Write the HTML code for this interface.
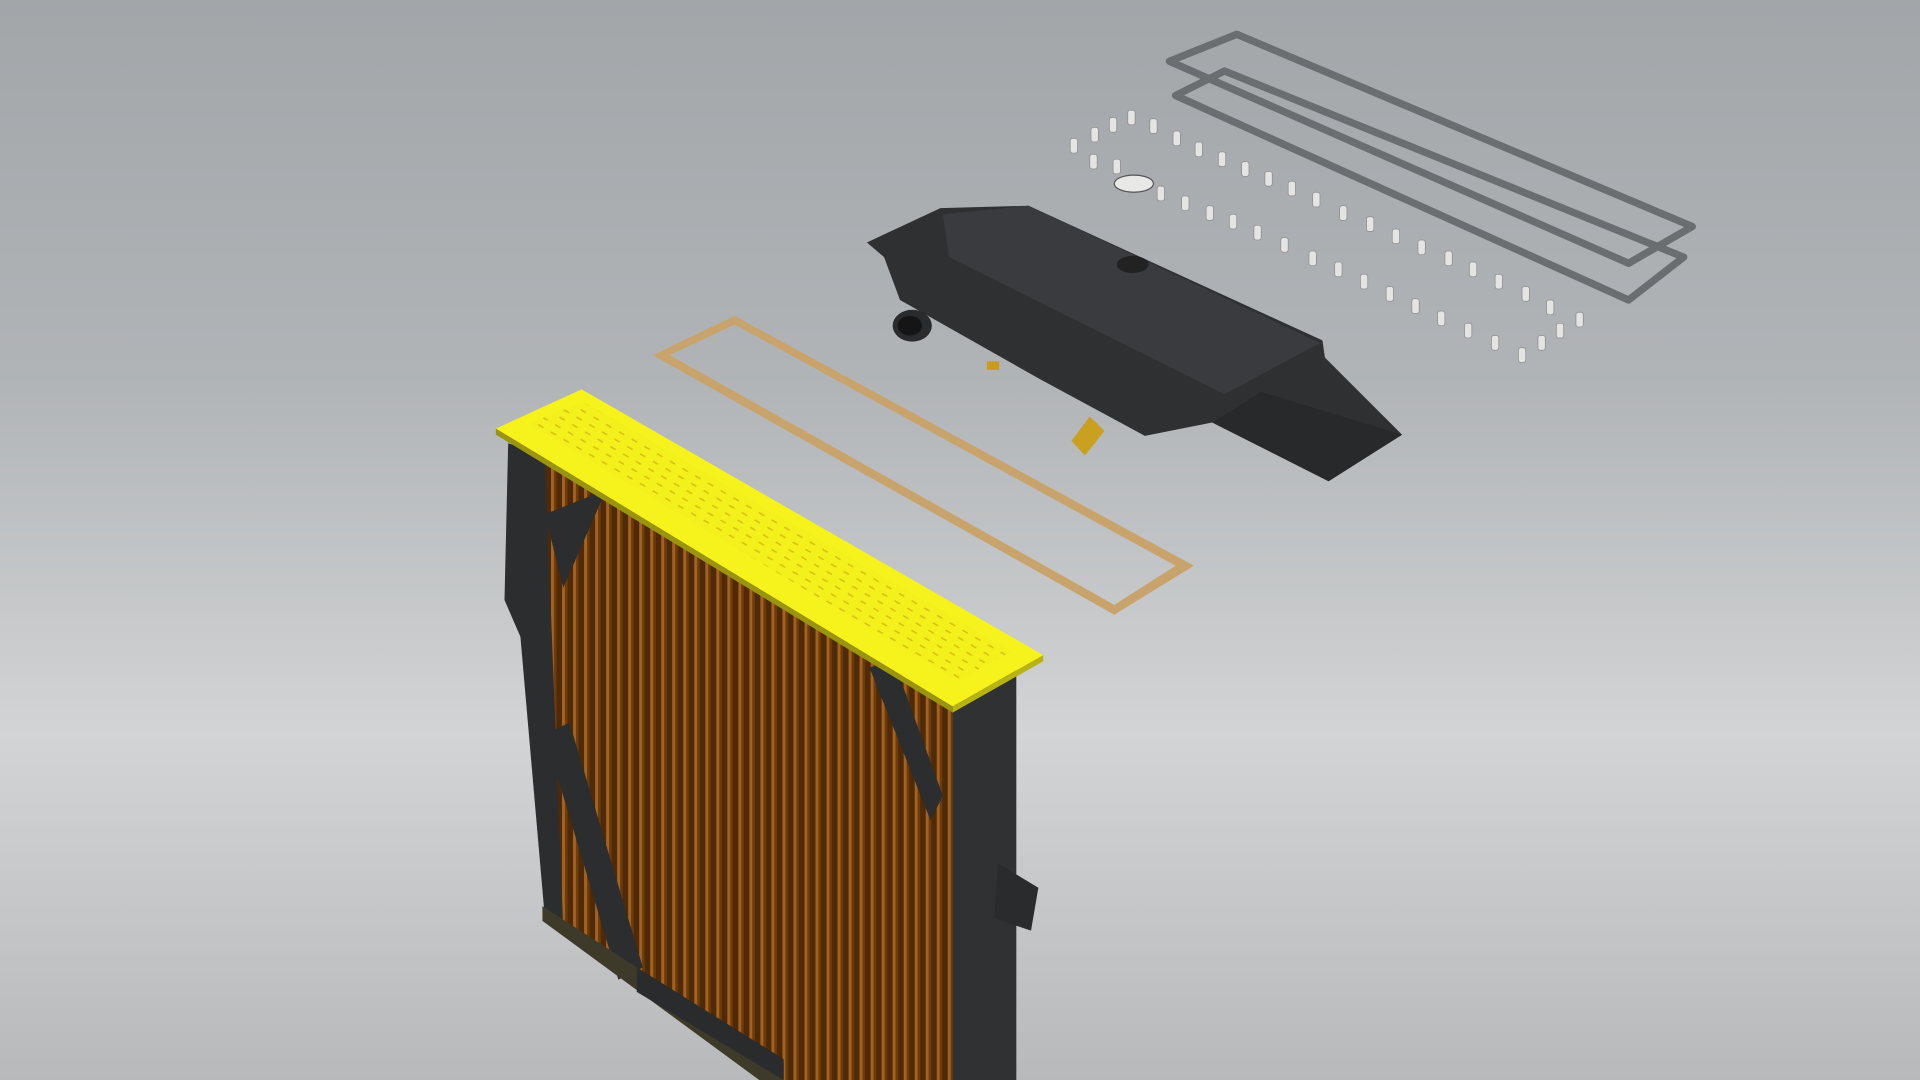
<!DOCTYPE html>
<html><head><meta charset="utf-8"><style>
html,body{margin:0;padding:0;width:1920px;height:1080px;overflow:hidden;background:#c4c6c8}
svg{display:block}
</style></head><body>
<svg width="1920" height="1080" viewBox="0 0 1568 882" preserveAspectRatio="none" xmlns="http://www.w3.org/2000/svg">
<defs>
<linearGradient id="bg" gradientUnits="userSpaceOnUse" x1="0" y1="0" x2="0" y2="882">
<stop offset="0" stop-color="#a2a6a9"/>
<stop offset="0.35" stop-color="#b1b4b7"/>
<stop offset="0.68" stop-color="#d2d4d5"/>
<stop offset="1" stop-color="#b7b9bb"/>
</linearGradient>
<pattern id="fins" width="9" height="10" patternUnits="userSpaceOnUse">
<rect width="9" height="10" fill="#4e2a08"/>
<rect x="0" width="2.5" height="10" fill="#a4621c"/>
<rect x="2.5" width="2" height="10" fill="#6e3c0c"/>
</pattern>
<pattern id="slots" width="12" height="7" patternUnits="userSpaceOnUse" patternTransform="rotate(30)">
<rect width="12" height="7" fill="#f2ee1a"/>
<rect x="2" y="3" width="5" height="1.2" fill="#c29a10"/>
</pattern>
</defs>
<rect width="1568" height="882" fill="url(#bg)"/>

<!-- gray gaskets -->
<polygon points="955,50 1010,28 1382,185 1330,215" fill="none" stroke="#6b6e71" stroke-width="6" stroke-linejoin="round"/>
<polygon points="960,78 1000,58 1375,210 1330,245" fill="none" stroke="#6b6e71" stroke-width="6" stroke-linejoin="round"/>

<!-- bolts -->
<g fill="#e4e4e2" stroke="#8c8c8a" stroke-width="0.6">
<rect x="874" y="113" width="6" height="12" rx="2"/><rect x="891" y="104" width="6" height="12" rx="2"/><rect x="906" y="96" width="6" height="12" rx="2"/><rect x="921" y="90" width="6" height="12" rx="2"/><rect x="939" y="97" width="6" height="12" rx="2"/><rect x="958" y="107" width="6" height="12" rx="2"/><rect x="976" y="116" width="6" height="12" rx="2"/><rect x="995" y="124" width="6" height="12" rx="2"/><rect x="1014" y="132" width="6" height="12" rx="2"/><rect x="1033" y="140" width="6" height="12" rx="2"/><rect x="1052" y="148" width="6" height="12" rx="2"/><rect x="1072" y="157" width="6" height="12" rx="2"/><rect x="1094" y="168" width="6" height="12" rx="2"/><rect x="1116" y="177" width="6" height="12" rx="2"/><rect x="1137" y="187" width="6" height="12" rx="2"/><rect x="1158" y="196" width="6" height="12" rx="2"/><rect x="1180" y="205" width="6" height="12" rx="2"/><rect x="1200" y="214" width="6" height="12" rx="2"/><rect x="1221" y="224" width="6" height="12" rx="2"/><rect x="1243" y="234" width="6" height="12" rx="2"/><rect x="1263" y="245" width="6" height="12" rx="2"/><rect x="1287" y="255" width="6" height="12" rx="2"/>
<rect x="890" y="126" width="6" height="12" rx="2"/><rect x="909" y="130" width="6" height="12" rx="2"/><rect x="945" y="152" width="6" height="12" rx="2"/><rect x="965" y="160" width="6" height="12" rx="2"/><rect x="985" y="168" width="6" height="12" rx="2"/><rect x="1004" y="175" width="6" height="12" rx="2"/><rect x="1024" y="184" width="6" height="12" rx="2"/><rect x="1046" y="194" width="6" height="12" rx="2"/><rect x="1069" y="205" width="6" height="12" rx="2"/><rect x="1090" y="214" width="6" height="12" rx="2"/><rect x="1111" y="224" width="6" height="12" rx="2"/><rect x="1132" y="234" width="6" height="12" rx="2"/><rect x="1153" y="244" width="6" height="12" rx="2"/><rect x="1174" y="254" width="6" height="12" rx="2"/><rect x="1196" y="264" width="6" height="12" rx="2"/><rect x="1218" y="274" width="6" height="12" rx="2"/><rect x="1240" y="284" width="6" height="12" rx="2"/><rect x="1256" y="274" width="6" height="12" rx="2"/><rect x="1271" y="264" width="6" height="12" rx="2"/>
</g>
<ellipse cx="926" cy="150" rx="16" ry="7" fill="#e8e8e6" stroke="#555" stroke-width="1"/>

<!-- black tank -->
<polygon points="708,198 768,170 840,168 1080,278 1082,292 1145,355 1085,393 990,345 935,356 850,310 735,245 722,210" fill="#2f3032"/>
<polygon points="770,175 840,168 1078,280 1000,322 775,210" fill="#3a3b3e"/>
<polygon points="990,345 1030,320 1145,355 1085,393" fill="#28292b"/>
<ellipse cx="925" cy="216" rx="13" ry="7" fill="#222"/>
<ellipse cx="745" cy="266" rx="16" ry="13" fill="#2a2b2d"/>
<ellipse cx="743" cy="266" rx="10" ry="8" fill="#151515"/>
<rect x="806" y="295" width="10" height="7" fill="#c89a20"/>
<path d="M875 360 L890 340 L902 352 L886 372 Z" fill="#c9a020"/>

<!-- cork gasket -->
<polygon points="533,290 600,258 975,462 910,502" fill="#c8a46c"/>
<polygon points="547,290 600,265 960,462 910,494" fill="url(#bg)"/>

<!-- radiator side frame -->
<polygon points="770,570 830,545 830,882 770,882" fill="#303133"/>
<polygon points="815,705 848,725 842,760 812,750" fill="#2a2b2d"/>
<!-- left frame -->
<polygon points="415,362 470,380 470,760 445,750 425,520 412,490" fill="#2c2d2f"/>
<!-- core -->
<polygon points="445,372 778,575 778,882 640,882 460,760" fill="url(#fins)"/>
<!-- braces -->
<polygon points="445,420 495,400 460,480" fill="#2c2d2f"/>
<polygon points="445,600 465,590 525,790 505,800" fill="#2c2d2f"/>
<polygon points="710,545 730,540 770,650 760,670" fill="#2c2d2f"/>
<!-- bottom rail -->
<polygon points="443,740 640,868 640,882 620,882 443,752" fill="#3e3a2a"/>
<polygon points="520,790 640,865 640,882 520,810" fill="#2a2b2d"/>
<!-- yellow plate -->
<polygon points="405,350 475,318 852,535 778,577" fill="#f6f21c"/>
<polygon points="432,346 476,328 826,532 782,556" fill="url(#slots)" opacity="0.6"/>
<polygon points="405,350 778,577 778,582 405,355" fill="#9a9510"/>
<polygon points="778,577 852,535 852,540 778,582" fill="#b8b315"/>
</svg>
</body></html>
